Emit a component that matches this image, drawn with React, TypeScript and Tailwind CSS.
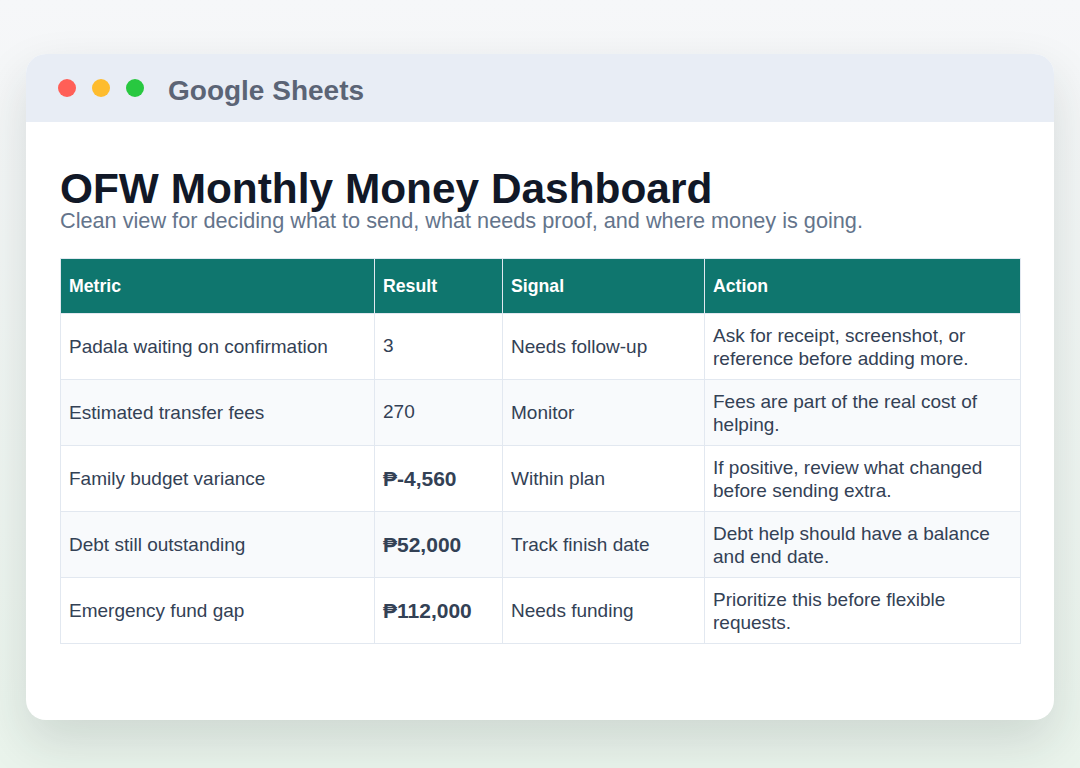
import React from "react"

type Row = {
  metric: string
  result: string
  strong?: boolean
  signal: string
  action: string
}

const rows: Row[] = [
  {
    metric: "Padala waiting on confirmation",
    result: "3",
    signal: "Needs follow-up",
    action: "Ask for receipt, screenshot, or reference before adding more.",
  },
  {
    metric: "Estimated transfer fees",
    result: "270",
    signal: "Monitor",
    action: "Fees are part of the real cost of helping.",
  },
  {
    metric: "Family budget variance",
    result: "₱-4,560",
    strong: true,
    signal: "Within plan",
    action: "If positive, review what changed before sending extra.",
  },
  {
    metric: "Debt still outstanding",
    result: "₱52,000",
    strong: true,
    signal: "Track finish date",
    action: "Debt help should have a balance and end date.",
  },
  {
    metric: "Emergency fund gap",
    result: "₱112,000",
    strong: true,
    signal: "Needs funding",
    action: "Prioritize this before flexible requests.",
  },
]

const headers = ["Metric", "Result", "Signal", "Action"]

const App = () => {
  return (
    <div className="h-[768px] w-full overflow-hidden bg-linear-to-b from-[#f6f7f9] to-[#eaf4ec] pt-[54px] font-['Liberation_Sans',Arial,sans-serif]">
      <div className="mx-[26px] overflow-hidden rounded-[20px] bg-white shadow-[0_22px_50px_rgba(30,45,40,0.14)]">
        <div className="flex h-[68px] items-center bg-[#e8edf5] pl-[32px]">
          <div className="flex gap-[16px]">
            <span className="h-[18px] w-[18px] rounded-full bg-[#ff5f57]" />
            <span className="h-[18px] w-[18px] rounded-full bg-[#febc2e]" />
            <span className="h-[18px] w-[18px] rounded-full bg-[#28c840]" />
          </div>
          <span className="mt-[5px] ml-[24px] text-[28px] font-bold text-[#5b6475]">
            Google Sheets
          </span>
        </div>

        <div className="px-[34px] pt-[48px] pb-[76px]">
          <h1 className="text-[42.4px] leading-[38px] font-bold text-[#111827]">
            OFW Monthly Money Dashboard
          </h1>
          <p className="mt-[2px] text-[21.7px] leading-[22px] text-[#64748b]">
            Clean view for deciding what to send, what needs proof, and where money is going.
          </p>

          <table className="mt-[26px] w-[960px] table-fixed border-collapse">
            <colgroup>
              <col className="w-[314px]" />
              <col className="w-[128px]" />
              <col className="w-[202px]" />
              <col className="w-[316px]" />
            </colgroup>
            <thead>
              <tr className="h-[55px] bg-[#0f766e]">
                {headers.map((h) => (
                  <th
                    key={h}
                    className="border border-[#e2e8f0] px-2 text-left text-[17.7px] font-bold text-white"
                  >
                    {h}
                  </th>
                ))}
              </tr>
            </thead>
            <tbody>
              {rows.map((row, i) => (
                <tr
                  key={row.metric}
                  className={`h-[66px] ${i % 2 === 1 ? "bg-[#f8fafc]" : "bg-white"}`}
                >
                  <td className="border border-[#e2e8f0] px-2 text-[19px] leading-[23px] text-[#334155]">
                    {row.metric}
                  </td>
                  <td
                    className={`border border-[#e2e8f0] px-2 text-[#334155] ${
                      row.strong ? "text-[21px] font-bold" : "text-[19px]"
                    }`}
                  >
                    {row.result}
                  </td>
                  <td className="border border-[#e2e8f0] px-2 text-[19px] leading-[23px] text-[#334155]">
                    {row.signal}
                  </td>
                  <td className="border border-[#e2e8f0] px-2 text-[19px] leading-[23px] text-[#334155]">
                    {row.action}
                  </td>
                </tr>
              ))}
            </tbody>
          </table>
        </div>
      </div>
    </div>
  )
}

export default App
